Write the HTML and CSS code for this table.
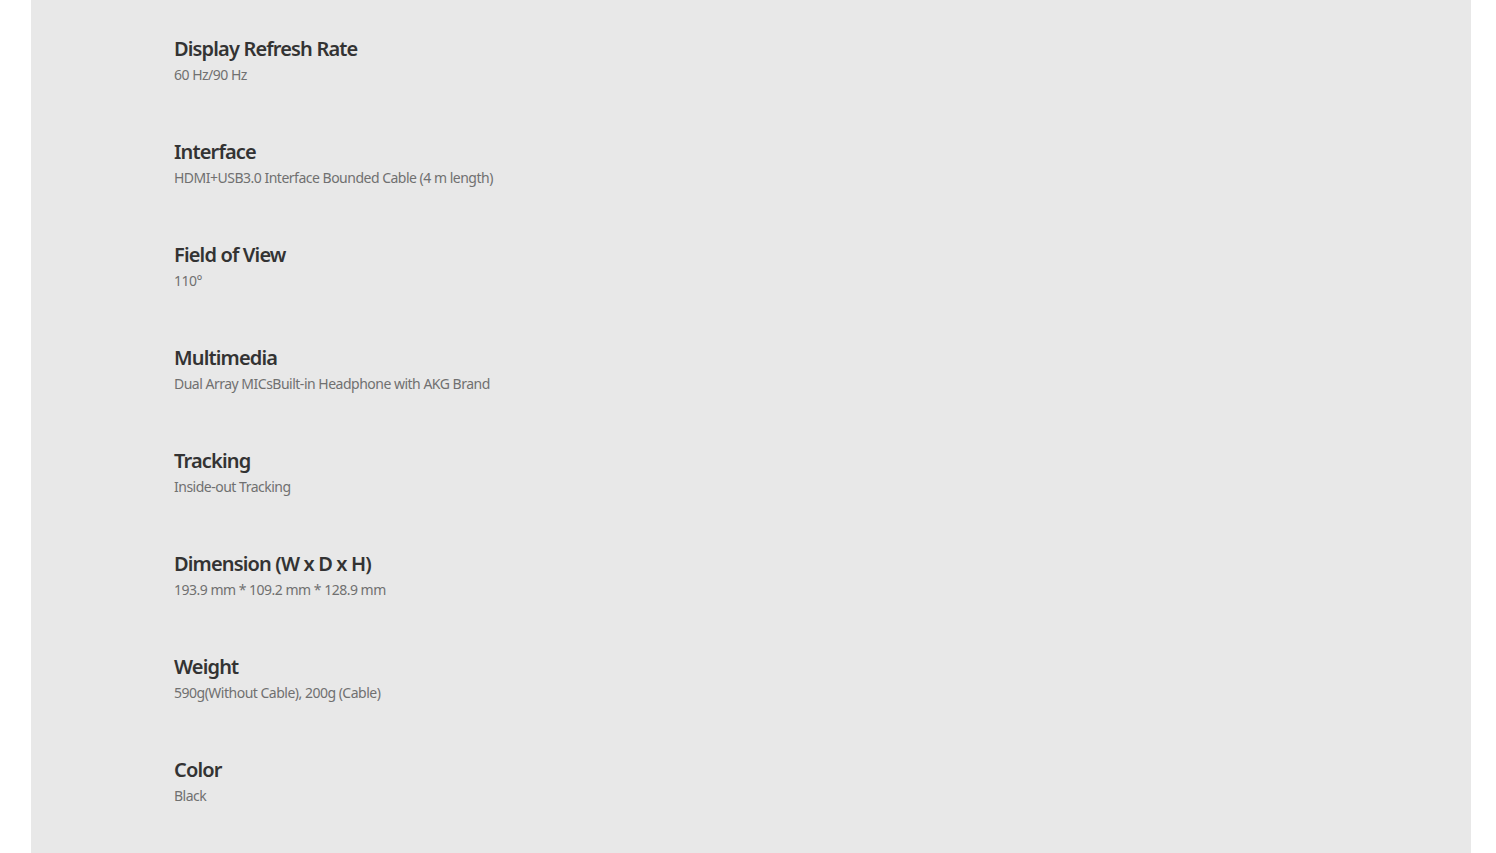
FILE: index.html
```html
<!DOCTYPE html>
<html lang="en">
<head>
  <meta charset="UTF-8">
  <title>Specs</title>
  <link rel="stylesheet" href="styles.css">
</head>
<body>
  <div class="specs">
    <ul class="spec-list">
      <li class="spec-item">
        <div class="spec-title">Display Refresh Rate</div>
        <div class="spec-value">60 Hz/90 Hz</div>
      </li>
      <li class="spec-item">
        <div class="spec-title">Interface</div>
        <div class="spec-value">HDMI+USB3.0 Interface Bounded Cable (4 m length)</div>
      </li>
      <li class="spec-item">
        <div class="spec-title">Field of View</div>
        <div class="spec-value">110°</div>
      </li>
      <li class="spec-item">
        <div class="spec-title">Multimedia</div>
        <div class="spec-value">Dual Array MICsBuilt-in Headphone with AKG Brand</div>
      </li>
      <li class="spec-item">
        <div class="spec-title">Tracking</div>
        <div class="spec-value">Inside-out Tracking</div>
      </li>
      <li class="spec-item">
        <div class="spec-title">Dimension (W x D x H)</div>
        <div class="spec-value">193.9 mm * 109.2 mm * 128.9 mm</div>
      </li>
      <li class="spec-item">
        <div class="spec-title">Weight</div>
        <div class="spec-value">590g(Without Cable), 200g (Cable)</div>
      </li>
      <li class="spec-item">
        <div class="spec-title">Color</div>
        <div class="spec-value">Black</div>
      </li>
    </ul>
  </div>
</body>
</html>
```

FILE: styles.css
```css
body {
  margin: 0;
  background: #fff;
  font-family: "Noto Sans", sans-serif;
}
.specs {
  margin: 0 25px 0 31px;
  background-color: #e8e8e8;
  padding: 36px 0 47px 143px;
}
.spec-list {
  list-style: none;
  margin: 0;
  padding: 0;
}
.spec-item {
  margin-bottom: 54px;
}
.spec-item:last-child {
  margin-bottom: 0;
}
.spec-title {
  font-size: 20px;
  line-height: 26px;
  font-weight: 600;
  color: #333;
  letter-spacing: -0.85px;
}
.spec-value {
  margin-top: 3px;
  font-size: 14px;
  line-height: 20px;
  color: #707070;
  letter-spacing: -0.5px;
}
```
